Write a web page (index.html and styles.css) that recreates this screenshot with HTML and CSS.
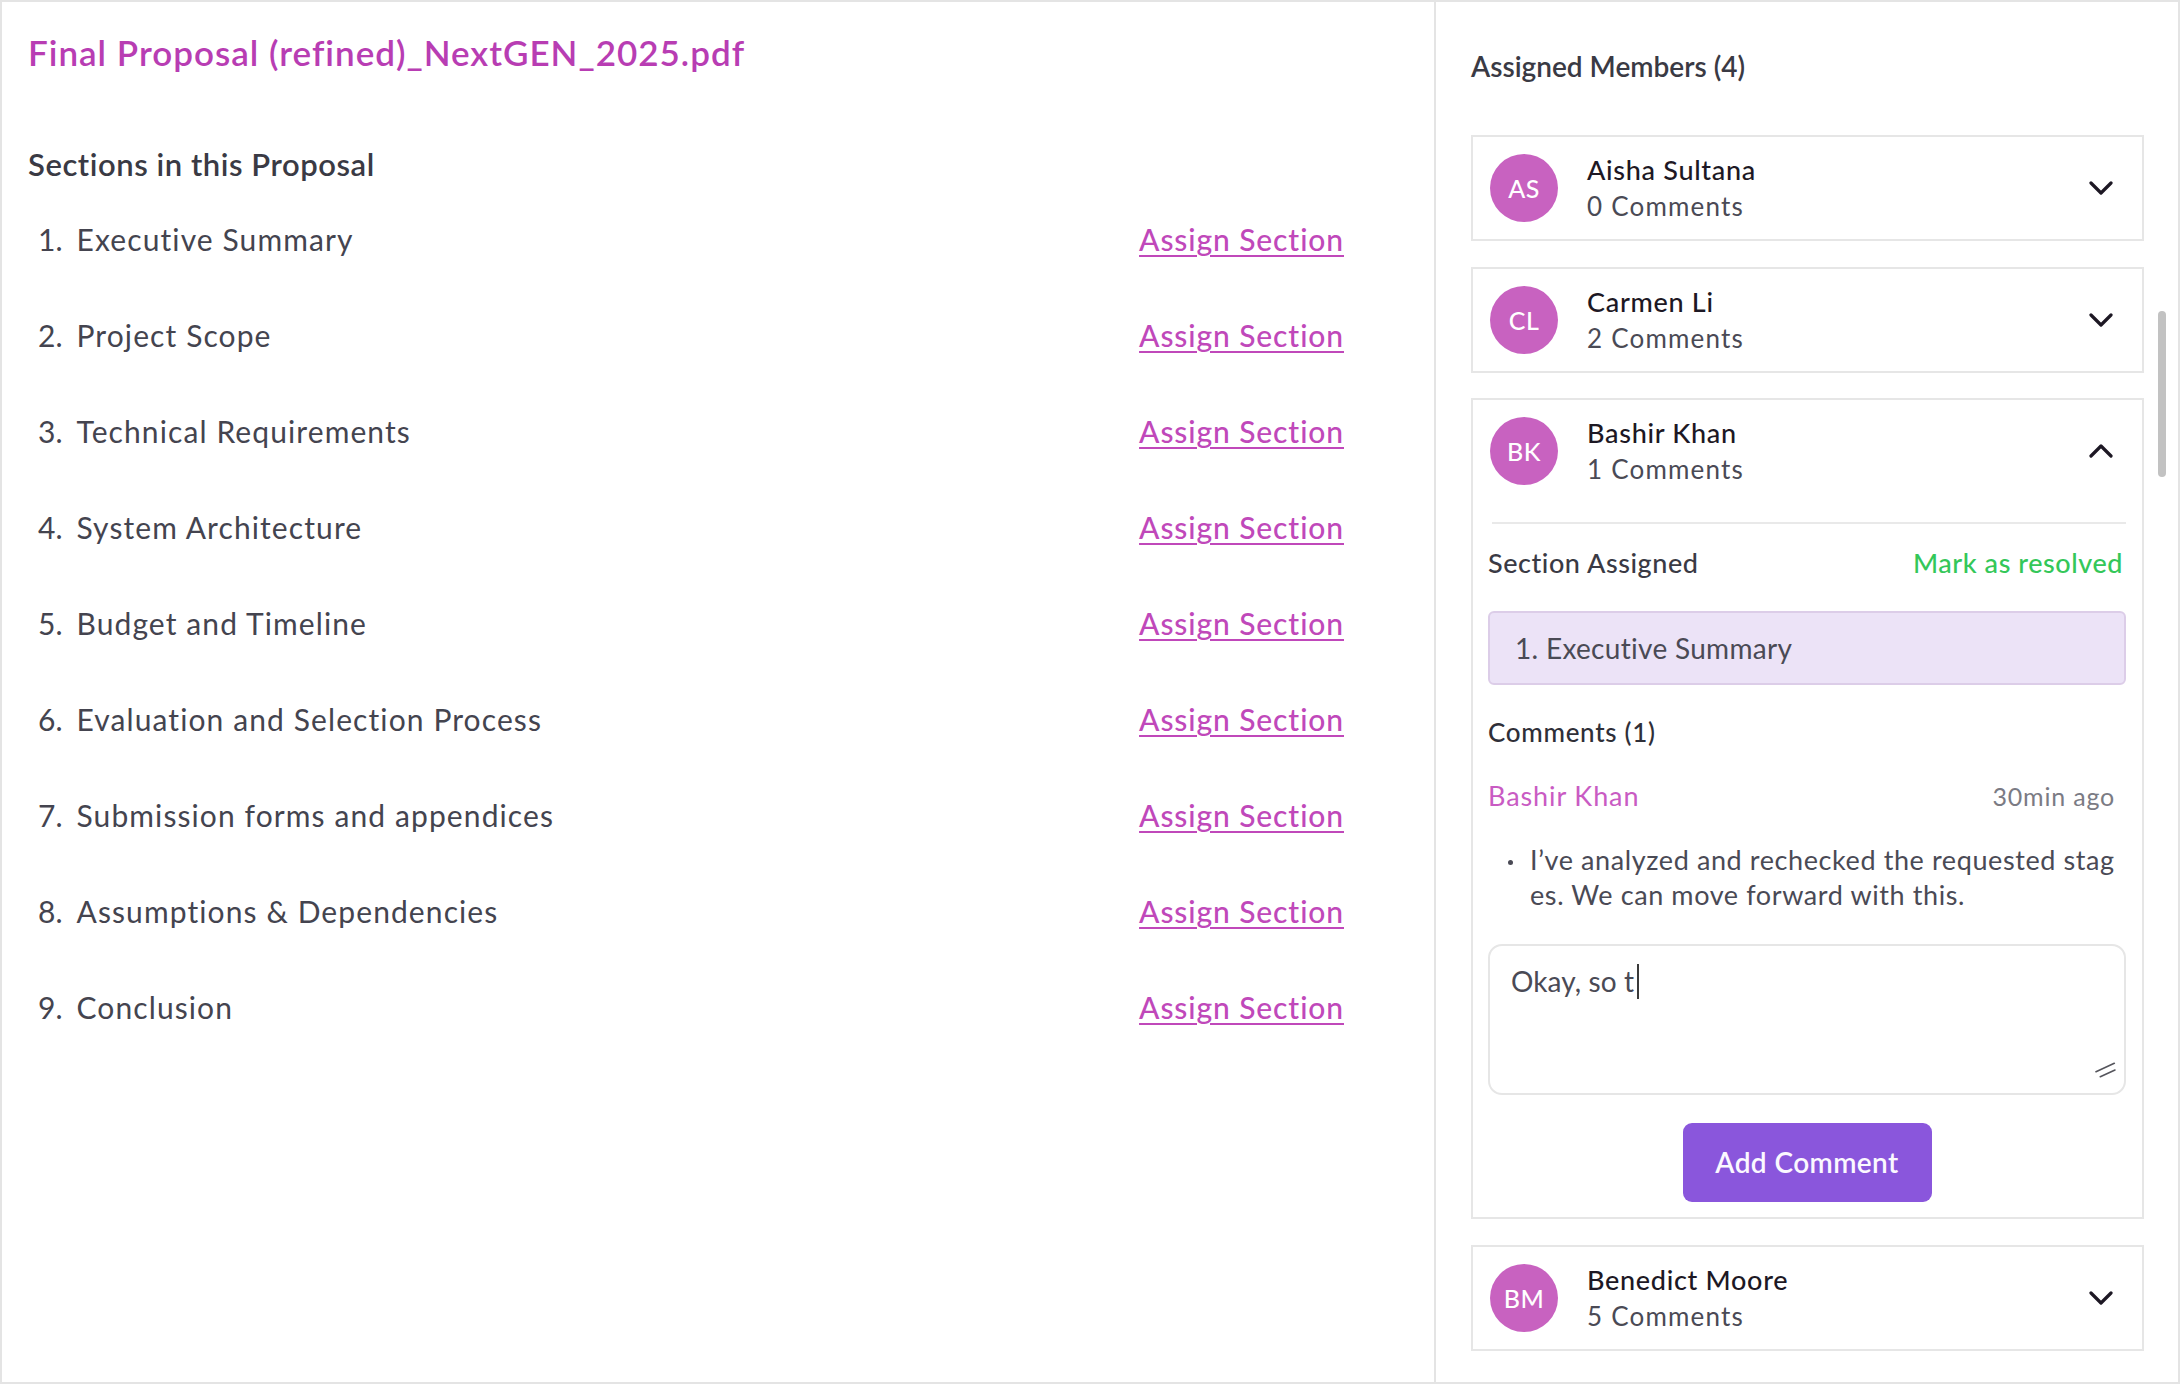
FILE: index.html
```html
<!DOCTYPE html>
<html lang="en">
<head>
<meta charset="utf-8">
<title>Final Proposal – Sections</title>
<link rel="stylesheet" href="styles.css">
</head>
<body>
<div class="frame">
  <section class="doc">
    <h1 class="doc-title">Final Proposal (refined)_NextGEN_2025.pdf</h1>
    <h2 class="sections-heading">Sections in this Proposal</h2>
    <ol class="section-list">
      <li class="section-row"><span class="section-num">1.</span><span class="section-name">Executive Summary</span><a class="assign-link" href="#">Assign Section</a></li>
      <li class="section-row"><span class="section-num">2.</span><span class="section-name">Project Scope</span><a class="assign-link" href="#">Assign Section</a></li>
      <li class="section-row"><span class="section-num">3.</span><span class="section-name">Technical Requirements</span><a class="assign-link" href="#">Assign Section</a></li>
      <li class="section-row"><span class="section-num">4.</span><span class="section-name">System Architecture</span><a class="assign-link" href="#">Assign Section</a></li>
      <li class="section-row"><span class="section-num">5.</span><span class="section-name">Budget and Timeline</span><a class="assign-link" href="#">Assign Section</a></li>
      <li class="section-row"><span class="section-num">6.</span><span class="section-name">Evaluation and Selection Process</span><a class="assign-link" href="#">Assign Section</a></li>
      <li class="section-row"><span class="section-num">7.</span><span class="section-name">Submission forms and appendices</span><a class="assign-link" href="#">Assign Section</a></li>
      <li class="section-row"><span class="section-num">8.</span><span class="section-name">Assumptions &amp; Dependencies</span><a class="assign-link" href="#">Assign Section</a></li>
      <li class="section-row"><span class="section-num">9.</span><span class="section-name">Conclusion</span><a class="assign-link" href="#">Assign Section</a></li>
    </ol>
  </section>

  <aside class="members">
    <h2 class="members-heading">Assigned Members (4)</h2>
    <div class="member-list">
      <div class="member-card">
        <div class="member-header">
          <div class="avatar">AS</div>
          <div class="member-info">
            <div class="member-name">Aisha Sultana</div>
            <div class="member-count">0 Comments</div>
          </div>
          <svg class="chevron" viewBox="0 0 26 14" width="26" height="14"><polyline points="3,2 13,12 23,2"/></svg>
        </div>
      </div>

      <div class="member-card">
        <div class="member-header">
          <div class="avatar">CL</div>
          <div class="member-info">
            <div class="member-name">Carmen Li</div>
            <div class="member-count">2 Comments</div>
          </div>
          <svg class="chevron" viewBox="0 0 26 14" width="26" height="14"><polyline points="3,2 13,12 23,2"/></svg>
        </div>
      </div>

      <div class="member-card">
        <div class="member-header">
          <div class="avatar">BK</div>
          <div class="member-info">
            <div class="member-name">Bashir Khan</div>
            <div class="member-count">1 Comments</div>
          </div>
          <svg class="chevron" viewBox="0 0 26 14" width="26" height="14"><polyline points="3,12 13,2 23,12"/></svg>
        </div>
        <div class="member-body">
          <div class="divider"></div>
          <div class="assigned-row">
            <span class="assigned-label">Section Assigned</span>
            <a class="resolve-link" href="#">Mark as resolved</a>
          </div>
          <div class="assigned-box">1. Executive Summary</div>
          <div class="comments-heading">Comments (1)</div>
          <div class="comment">
            <div class="comment-meta">
              <span class="comment-author">Bashir Khan</span>
              <span class="comment-time">30min ago</span>
            </div>
            <div class="comment-item">
              <span class="bullet"></span>
              <div class="comment-text">
                <span class="comment-line">I’ve analyzed and rechecked the requested stag</span>
                <span class="comment-line">es. We can move forward with this.</span>
              </div>
            </div>
          </div>
          <div class="comment-input">
            <span class="typed">Okay, so t</span><span class="caret"></span>
            <svg class="grip" viewBox="0 0 21 16" width="21" height="16"><line x1="1" y1="9.7" x2="19.3" y2="1.3"/><line x1="5.3" y1="14.7" x2="20" y2="8"/></svg>
          </div>
          <button class="add-btn" type="button">Add Comment</button>
        </div>
      </div>

      <div class="member-card">
        <div class="member-header">
          <div class="avatar">BM</div>
          <div class="member-info">
            <div class="member-name">Benedict Moore</div>
            <div class="member-count">5 Comments</div>
          </div>
          <svg class="chevron" viewBox="0 0 26 14" width="26" height="14"><polyline points="3,2 13,12 23,2"/></svg>
        </div>
      </div>
    </div>
  </aside>

  <div class="scroll-thumb"></div>
</div>
</body>
</html>
```

FILE: styles.css
```css
* { box-sizing: border-box; }

html, body {
  margin: 0;
  padding: 0;
  background: #ffffff;
}

body {
  font-family: "Lato", "Noto Sans", sans-serif;
  color: #4a4a55;
}

.frame {
  width: 2180px;
  height: 1384px;
  border: 2px solid #e4e4e4;
  display: flex;
  position: relative;
  overflow: hidden;
  background: #ffffff;
}

/* ---------- Left: document ---------- */
.doc {
  width: 1434px;
  flex: none;
  border-right: 2px solid #e4e4e4;
  padding: 28px 90px 0 26px;
}

.doc-title {
  margin: 0;
  font-size: 35px;
  line-height: 44px;
  font-weight: 600;
  letter-spacing: 1px;
  color: #b83db3;
}

.sections-heading {
  margin: 70px 0 0;
  font-size: 31px;
  line-height: 40px;
  font-weight: 600;
  letter-spacing: 0.55px;
  color: #3a3a44;
}

.section-list {
  list-style: none;
  margin: 7px 0 0;
  padding: 0;
}

.section-row {
  height: 96px;
  display: flex;
  align-items: center;
  padding-left: 10px;
  font-size: 30px;
  line-height: 36px;
  color: #44444f;
}

.section-num {
  width: 38.5px;
  flex: none;
}

.section-name {
  flex: 1;
  letter-spacing: 1.1px;
}

.assign-link {
  color: #c048ba;
  font-weight: 500;
  font-size: 30px;
  letter-spacing: 0.9px;
  text-decoration: underline;
  text-decoration-thickness: 2px;
  text-underline-offset: 4px;
}

/* ---------- Right: members ---------- */
.members {
  flex: 1;
  padding: 46px 34px 0 35px;
}

.members-heading {
  margin: 0;
  font-size: 28px;
  line-height: 36px;
  font-weight: 600;
  color: #3a3a44;
}

.member-list {
  margin-top: 51px;
  display: flex;
  flex-direction: column;
  gap: 25.5px;
}

.member-card {
  border: 2px solid #e6e6e6;
}

.member-header {
  display: flex;
  align-items: center;
  padding: 15px 17px;
}

.avatar {
  width: 68px;
  height: 68px;
  flex: none;
  border-radius: 50%;
  background: #c862c0;
  color: #ffffff;
  font-size: 25px;
  font-weight: 500;
  letter-spacing: 0.5px;
  display: flex;
  align-items: center;
  justify-content: center;
}

.member-info {
  margin-left: 29px;
  flex: 1;
}

.member-name {
  font-size: 27px;
  line-height: 36px;
  font-weight: 500;
  letter-spacing: 0.7px;
  color: #1d1824;
}

.member-count {
  font-size: 26px;
  line-height: 36px;
  letter-spacing: 1.2px;
  color: #4a4a55;
}

.chevron {
  flex: none;
  margin-right: 11px;
  fill: none;
  stroke: #1d1824;
  stroke-width: 3.2;
  stroke-linecap: round;
  stroke-linejoin: round;
}

.member-body {
  padding: 0 16px 15.5px 15px;
}

.divider {
  margin: 20px 0 0 4px;
  height: 2px;
  background: #e9e9e9;
}

.assigned-row {
  margin-top: 21px;
  display: flex;
  justify-content: space-between;
  font-size: 27px;
  line-height: 36px;
  font-weight: 500;
  letter-spacing: 0.55px;
}

.assigned-label {
  color: #3a3a44;
}

.resolve-link {
  color: #34c759;
  text-decoration: none;
  margin-right: 3px;
}

.assigned-box {
  margin-top: 30px;
  height: 74px;
  display: flex;
  align-items: center;
  padding-left: 25px;
  background: #ece3f7;
  border: 2px solid #dccde8;
  border-radius: 6px;
  font-size: 28px;
  letter-spacing: 0.3px;
  color: #4a4a55;
}

.comments-heading {
  margin-top: 29px;
  font-size: 26px;
  line-height: 36px;
  font-weight: 500;
  letter-spacing: 0.7px;
  color: #2f2f38;
}

.comment {
  margin-top: 27.5px;
  padding-right: 11px;
}

.comment-meta {
  display: flex;
  justify-content: space-between;
  align-items: baseline;
  line-height: 36px;
}

.comment-author {
  font-size: 27px;
  letter-spacing: 0.9px;
  color: #c95bc3;
}

.comment-time {
  font-size: 25px;
  letter-spacing: 0.8px;
  color: #7b7b84;
}

.comment-item {
  margin-top: 28px;
  display: flex;
  align-items: flex-start;
}

.bullet {
  width: 5px;
  height: 5px;
  flex: none;
  border-radius: 50%;
  background: #4a4a55;
  margin: 18px 17px 0 20px;
}

.comment-text {
  font-size: 27px;
  line-height: 35px;
  letter-spacing: 0.6px;
  color: #4a4a55;
}

.comment-line {
  display: block;
  white-space: nowrap;
}

.comment-input {
  position: relative;
  margin-top: 32px;
  height: 151px;
  border: 2px solid #e6e6e6;
  border-radius: 14px;
  padding: 17px 21px;
  font-size: 28px;
  line-height: 36px;
  letter-spacing: 0.1px;
  color: #4a4a55;
}

.caret {
  display: inline-block;
  width: 2px;
  height: 35px;
  margin-left: 3px;
  background: #3a3a3a;
  vertical-align: -7px;
}

.grip {
  position: absolute;
  right: 8px;
  bottom: 14.5px;
  stroke: #55555c;
  stroke-width: 1.6;
  stroke-linecap: round;
}

.add-btn {
  display: block;
  margin: 28px auto 0;
  width: 249px;
  height: 79px;
  border: none;
  border-radius: 9px;
  background: #8a56dc;
  color: #fbf8ff;
  font-family: "Lato", "Noto Sans", sans-serif;
  font-size: 28px;
  font-weight: 600;
  letter-spacing: 0.4px;
}

/* overlay scrollbar thumb */
.scroll-thumb {
  position: absolute;
  left: 2156px;
  top: 309px;
  width: 8px;
  height: 166px;
  border-radius: 4px;
  background: #c2c2c2;
}
```
